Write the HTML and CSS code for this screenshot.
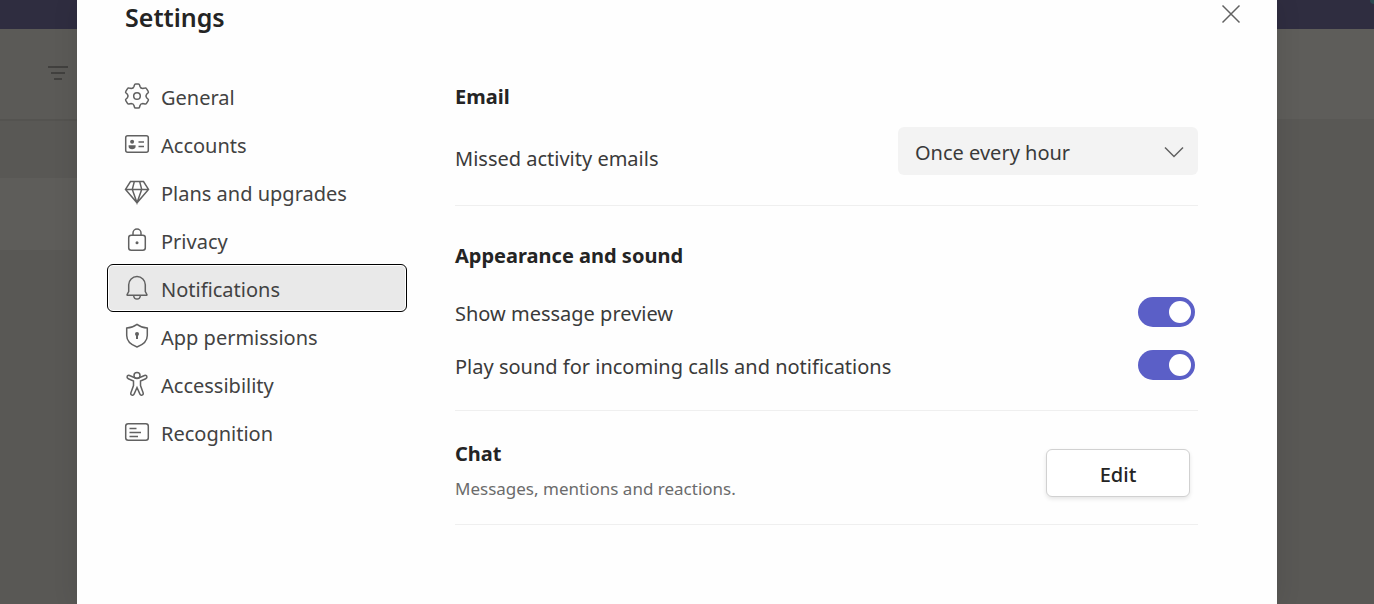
FILE: index.html
```html
<!DOCTYPE html>
<html lang="en">
<head>
<meta charset="utf-8">
<meta name="viewport" content="width=device-width, initial-scale=1">
<title>Settings</title>
<link rel="stylesheet" href="styles.css">
</head>
<body>
<div class="stage">
  <div class="app" aria-hidden="true">
    <div class="app-bar"><span class="presence"></span></div>
    <div class="app-body">
      <div class="app-list">
        <div class="list-head">
          <svg class="filter" viewBox="0 0 22 16" width="22" height="16"><path d="M1 2h20M4 8h14M7 14h8"/></svg>
        </div>
        <div class="list-row"></div>
        <div class="list-row light"></div>
      </div>
      <div class="app-main"><div class="main-head"></div></div>
    </div>
  </div>

  <main class="dialog" role="dialog" aria-labelledby="title">
    <header class="dialog-head">
      <h1 id="title">Settings</h1>
      <button class="close" type="button" aria-label="Close">
        <svg viewBox="0 0 20 20" width="20" height="20"><path d="M1.5 1.5l17 17M18.5 1.5l-17 17"/></svg>
      </button>
    </header>
    <div class="dialog-body">
      <nav class="nav">
        <a class="nav-item" href="#general">
          <svg class="icon" viewBox="0 0 26 26"><path d="M11.6 1h2.8q1 0 1.2 1L16 3.5Q16.6 5.5 18.8 5.5L20.9 5Q22 4.7 22.5 5.6L24.2 8.4Q24.8 9.3 24 10L22.6 11.3Q21.3 13 22.6 14.7L24 16Q24.8 16.7 24.2 17.6L22.5 20.4Q22 21.3 20.9 21L18.8 20.5Q16.6 20.5 16 22.5L15.6 24Q15.4 25 14.4 25H11.6Q10.6 25 10.4 24L10 22.5Q9.4 20.5 7.2 20.5L5.1 21Q4 21.3 3.5 20.4L1.8 17.6Q1.2 16.7 2 16L3.4 14.7Q4.7 13 3.4 11.3L2 10Q1.2 9.3 1.8 8.4L3.5 5.6Q4 4.7 5.1 5L7.2 5.5Q9.4 5.5 10 3.5L10.4 2Q10.6 1 11.6 1z"/><circle cx="13" cy="13" r="3.3"/></svg>
          <span>General</span></a>
        <a class="nav-item" href="#accounts">
          <svg class="icon" viewBox="0 0 26 26"><rect x="1.7" y="4.7" width="22.6" height="16.6" rx="2"/><circle class="solid" cx="8.1" cy="10.7" r="2"/><path class="solid" d="M4.6 14.2h7v1.4c0 1.8-1.5 2.7-3.5 2.7s-3.5-.9-3.5-2.7z"/><path d="M14.5 11H20M14.5 15.500H20"/></svg>
          <span>Accounts</span></a>
        <a class="nav-item" href="#plans">
          <svg class="icon" viewBox="0 0 26 26"><path d="M6.5 2.6h13l5 7.8L13 23.8 1.5 10.4zM1.5 10.4h23M10.3 2.6l-2 7.8L13 23.8l4.7-13.4-2-7.8"/></svg>
          <span>Plans and upgrades</span></a>
        <a class="nav-item" href="#privacy">
          <svg class="icon" viewBox="0 0 26 26"><rect x="4.7" y="8.2" width="16.6" height="15" rx="2.5"/><path d="M9 8.200V6a4 4 0 0 1 8 0v2.200"/><circle class="solid" cx="13" cy="15.800" r="1.500"/></svg>
          <span>Privacy</span></a>
        <a class="nav-item selected" href="#notifications" aria-current="page">
          <svg class="icon" viewBox="0 0 26 26"><path d="M4.7 16.500V9.800a8.300 8.300 0 0 1 16.600 0v6.700l1.600 3q.3.800-.6.800H3.700q-.9 0-.6-.8zM9.600 20.500q.4 3.500 3.400 3.500t3.400-3.500"/></svg>
          <span>Notifications</span></a>
        <a class="nav-item" href="#permissions">
          <svg class="icon" viewBox="0 0 26 26"><path d="M13 1.400c3 2.300 6.400 3.500 10.300 3.700v7.400c0 5.500-3.600 9-10.300 11.500C6.300 21.500 2.700 18 2.700 12.500V5.100C6.600 4.900 10 3.700 13 1.400z"/><circle class="solid" cx="13" cy="11" r="2"/><path class="stem" d="M13 12v4"/></svg>
          <span>App permissions</span></a>
        <a class="nav-item" href="#accessibility">
          <svg class="icon" viewBox="0 0 26 26"><path d="M10.200 6.500L5.500 4.500c-2.300-.9-3.500 2.100-1.200 3.200l5.200 2.400v4.400l-2.600 7.200c-.8 2.500 2.300 3.500 3.300 1.200l2.800-6.400 2.800 6.400c1 2.300 4.100 1.300 3.300-1.200l-2.600-7.200v-4.400l5.200-2.400c2.300-1.100 1.100-4.100-1.200-3.200l-4.700 2q-2.800 1.400-5.600 0z"/><circle cx="13" cy="4.400" r="3"/></svg>
          <span>Accessibility</span></a>
        <a class="nav-item" href="#recognition">
          <svg class="icon" viewBox="0 0 26 26"><rect x="1.700" y="4.700" width="22.600" height="16.600" rx="2.500"/><path d="M5.500 9.500h7M5.500 13.500h11.500M5.500 17.500h8.500"/></svg>
          <span>Recognition</span></a>
      </nav>

      <div class="content">
        <section class="section email">
          <h2>Email</h2>
          <div class="row">
            <label for="missed">Missed activity emails</label>
            <div class="select-wrap">
              <select id="missed"><option>Once every hour</option></select>
              <svg class="chevron" viewBox="0 0 20 12" width="20" height="12"><path d="M1 1.500l9 9 9-9"/></svg>
            </div>
          </div>
        </section>
        <section class="section sound">
          <h2>Appearance and sound</h2>
          <div class="toggles">
            <div class="row"><label for="preview">Show message preview</label><input class="switch" id="preview" type="checkbox" checked></div>
            <div class="row"><label for="play">Play sound for incoming calls and notifications</label><input class="switch" id="play" type="checkbox" checked></div>
          </div>
        </section>
        <section class="section chat">
          <div>
            <h2>Chat</h2>
            <p>Messages, mentions and reactions.</p>
          </div>
          <button class="edit" type="button">Edit</button>
        </section>
      </div>
    </div>
  </main>
</div>
</body>
</html>
```
FILE: styles.css
```css
* {
  box-sizing: border-box;
}

body {
  margin: 0;
  color: #242424;
  font-family: "Noto Sans", "Open Sans", sans-serif;
  font-size: 20px;
  line-height: 28px;
}

h1,
h2,
p {
  margin: 0;
}

svg {
  fill: none;
  stroke: #616161;
  stroke-width: 1.5;
}

.stage {
  display: grid;
  min-height: 100vh;
}

.app,
.dialog {
  grid-area: 1 / 1;
}

.app {
  display: flex;
  flex-direction: column;
  background: #595855;
}

.app-bar {
  display: flex;
  justify-content: flex-end;
  height: 29px;
  overflow: hidden;
  background: #2f2d40;
}

.presence {
  width: 4px;
  height: 4px;
  border-radius: 0 0 0 4px;
  background: #2b4a50;
}

.app-body {
  display: flex;
  flex: 1;
}

.app-list {
  width: 77px;
}

.list-head {
  display: flex;
  justify-content: flex-end;
  align-items: center;
  height: 92px;
  padding: 0 8px 2px 0;
  border-bottom: 2px solid #545350;
  background: #5b5a57;
}

.filter {
  stroke: #3a3937;
}

.list-row {
  height: 57px;
  background: #595855;
}

.list-row.light {
  height: 72px;
  background: #5e5d5a;
}

.app-main {
  flex: 1;
}

.main-head {
  height: 90px;
  background: #5e5d5a;
}

.dialog {
  margin: 0 97px 0 77px;
  padding: 0 79px 40px 30px;
  background: #fefefe;
  box-shadow: 0 0 24px rgba(0, 0, 0, 0.1);
  z-index: 1;
}

.dialog-head {
  display: flex;
  justify-content: space-between;
  height: 72px;
  margin-right: -43px;
  padding: 4px 0 0 18px;
}

h1 {
  font-size: 25px;
  font-weight: 600;
  line-height: 26px;
}

.close {
  width: 20px;
  height: 20px;
  padding: 0;
  border: 0;
  background: none;
}

.close svg {
  display: block;
}

.dialog-body {
  display: flex;
  gap: 48px;
}

.nav {
  flex: 0 0 300px;
}

.nav-item {
  display: flex;
  align-items: center;
  gap: 11px;
  height: 48px;
  padding: 4px 16px 0;
  border: 1px solid transparent;
  border-radius: 6px;
  color: #424242;
  text-decoration: none;
}

.nav-item.selected {
  border-color: #000;
  background: #e9e9e9;
  box-shadow: inset 0 0 0 1px #fff;
}

.icon {
  width: 26px;
  height: 26px;
  margin-bottom: 4px;
}

.icon .solid {
  fill: #616161;
  stroke: none;
}

.icon .stem {
  stroke-width: 2;
}

.content {
  flex: 1;
}

.section {
  border-bottom: 1px solid #efefef;
}

.row {
  display: flex;
  justify-content: space-between;
  align-items: center;
  color: #3a3a3a;
}

h2 {
  font-size: 20px;
  font-weight: 700;
  line-height: 28px;
}

.email {
  padding: 11px 0 30px;
}

.email .row {
  margin-top: 16px;
}

.email label {
  padding-top: 16px;
}

.select-wrap {
  display: grid;
  align-items: center;
  width: 300px;
}

.select-wrap > * {
  grid-area: 1 / 1;
}

select {
  height: 48px;
  padding: 4px 48px 0 17px;
  appearance: none;
  border: 0;
  border-radius: 6px;
  background: #f3f3f3;
  color: #3a3a3a;
  font: inherit;
}

.chevron {
  justify-self: end;
  margin: 2px 14px 0 0;
  pointer-events: none;
}

.sound {
  padding: 36px 0 30px;
}

.toggles {
  display: grid;
  gap: 23px;
  margin-top: 27px;
}

.toggles .row {
  height: 30px;
}

.toggles label {
  padding-top: 4px;
}

.switch {
  width: 57px;
  height: 30px;
  margin: 0 3px 0 0;
  padding: 4px;
  appearance: none;
  border-radius: 16px;
  background: #5b5fc7;
}

.switch::before {
  content: "";
  display: block;
  width: 22px;
  height: 22px;
  margin-left: auto;
  border-radius: 50%;
  background: #fff;
}

.switch:not(:checked)::before {
  margin-left: 0;
}

.chat {
  display: flex;
  justify-content: space-between;
  padding: 29px 0 20px;
}

.chat p {
  margin-top: 9px;
  color: #6b6b6b;
  font-size: 17px;
  line-height: 24px;
}

.edit {
  width: 144px;
  height: 48px;
  margin: 9px 8px 7px 0;
  padding: 4px 0 0;
  border: 1px solid #d1d1d1;
  border-radius: 6px;
  background: #fff;
  box-shadow: 0 2px 4px rgba(0, 0, 0, 0.1);
  color: #242424;
  font: inherit;
  font-weight: 500;
}
```
